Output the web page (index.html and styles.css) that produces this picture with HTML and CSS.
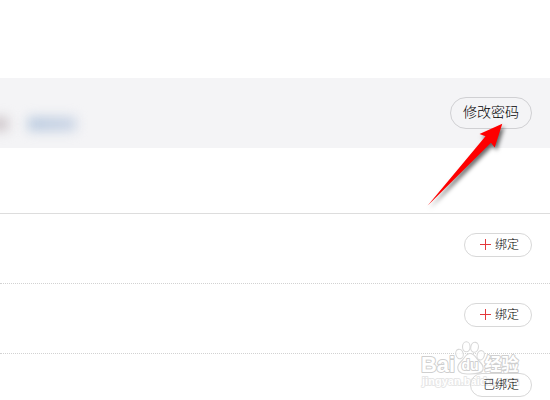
FILE: index.html
```html
<!DOCTYPE html>
<html lang="zh-CN">
<head>
    <meta charset="UTF-8">
    <meta name="viewport" content="width=device-width, initial-scale=1.0">
    <title>账号安全</title>
    <link rel="stylesheet" href="styles.css">
</head>
<body>
    <div class="account-page">
        <div class="account-bar">
            <div class="account-info">
                <span class="masked masked-label"></span>
                <span class="masked masked-link"></span>
            </div>
            <button type="button" class="btn btn-password">修改密码</button>
        </div>

        <div class="section-header"></div>

        <div class="bind-row">
            <button type="button" class="btn btn-bind"><i class="plus"></i>绑定</button>
        </div>
        <div class="bind-row">
            <button type="button" class="btn btn-bind"><i class="plus"></i>绑定</button>
        </div>
        <div class="bind-row bind-row-last">
            <button type="button" class="btn btn-bound">已绑定</button>
        </div>
    </div>

    <svg class="arrow" width="100" height="110" viewBox="420 110 100 110">
        <path d="M502.3 123.7 L479.5 134 L485.5 136.3 L427.5 205.8 L491 142.8 L494.7 147.5 Z" fill="#fe0000"/>
    </svg>

    <svg class="watermark" width="110" height="55" viewBox="415 338 110 55">
        <g class="paw">
            <ellipse cx="459.5" cy="354" rx="3.7" ry="4.8" transform="rotate(-15 459.5 354)"/>
            <ellipse cx="466.3" cy="346.8" rx="3.8" ry="5"/>
            <ellipse cx="474.6" cy="347.3" rx="3.8" ry="5" transform="rotate(12 474.6 347.3)"/>
            <ellipse cx="480.7" cy="355.3" rx="3.6" ry="4.7" transform="rotate(15 480.7 355.3)"/>
            <path d="M470 353.500c-4 0-5 4-8 7s-5 5-4 9 5 4.500 12 4.500 12-.5 13-4.500-1.500-6-4.500-9-4-7-8.500-7z"/>
        </g>
        <text class="brand" x="421" y="372" textLength="34" lengthAdjust="spacingAndGlyphs">Bai</text>
        <text class="brand brand-du" x="461.500" y="370" textLength="17" lengthAdjust="spacingAndGlyphs">du</text>
        <text class="brand brand-cn" x="484.500" y="371" textLength="34" lengthAdjust="spacingAndGlyphs">经验</text>
        <text class="brand brand-url" x="422" y="385" textLength="97">jingyan.baidu.com</text>
    </svg>
</body>
</html>
```

FILE: styles.css
```css
* {
    margin: 0;
    padding: 0;
    box-sizing: border-box;
}

body {
    font-family: "Liberation Sans", "Noto Sans CJK SC", sans-serif;
    background: #fff;
    color: #333;
    height: 400px;
    overflow: hidden;
    position: relative;
}

.account-page {
    padding-top: 78px;
}

.account-bar {
    display: flex;
    align-items: center;
    justify-content: space-between;
    height: 70px;
    padding-right: 18px;
    background: #f4f4f6;
}

.account-info {
    display: flex;
    align-items: center;
    gap: 20px;
    padding-top: 22px;
}

.masked {
    height: 14px;
    filter: blur(6px);
}

.masked-label {
    width: 16px;
    margin-left: -8px;
    background: #cdc5c9;
}

.masked-link {
    width: 48px;
    background: linear-gradient(90deg, #b9cadf, #cad4e5);
}

.btn {
    display: flex;
    align-items: center;
    justify-content: center;
    height: 24px;
    padding-bottom: 1px;
    border: 1px solid #d8d8d8;
    border-radius: 16px;
    background: transparent;
    color: #000;
    font-family: inherit;
    font-size: 12px;
    font-weight: 300;
    line-height: 1;
    white-space: nowrap;
    cursor: pointer;
}

.btn-password {
    width: 82px;
    height: 32px;
    padding-bottom: 2px;
    border-color: #d0d0d3;
    font-size: 14px;
}

.section-header {
    height: 66px;
    border-bottom: 1px solid #ddd;
}

.bind-row {
    display: flex;
    align-items: flex-start;
    justify-content: flex-end;
    height: 70px;
    padding: 19px 18px 0 0;
    border-bottom: 1px dotted #d2d2d2;
}

.bind-row-last {
    height: 46px;
    border-bottom: none;
}

.btn-bind {
    width: 68px;
    padding-left: 3px;
    gap: 4px;
}

.btn-bound {
    position: relative;
    z-index: 2;
    width: 62px;
}

.plus {
    width: 11px;
    height: 11px;
    background:
        linear-gradient(#e4393c, #e4393c) center / 11px 1px no-repeat,
        linear-gradient(#e4393c, #e4393c) center / 1px 11px no-repeat;
}

.arrow {
    position: absolute;
    left: 420px;
    top: 110px;
    filter: drop-shadow(2px 3px 2px rgba(0, 0, 0, 0.6));
    pointer-events: none;
}

.watermark {
    position: absolute;
    left: 415px;
    top: 338px;
    z-index: 1;
    pointer-events: none;
}

.paw {
    fill: rgba(255, 255, 255, 0.8);
    stroke: #d8d8d8;
    stroke-width: 1.1;
}

.brand {
    font-size: 22px;
    font-weight: bold;
    fill: #fff;
    stroke: #cfcfcf;
    stroke-width: 2;
    stroke-linejoin: round;
    paint-order: stroke;
}

.brand-du {
    font-size: 15px;
}

.brand-cn {
    font-size: 18px;
}

.brand-url {
    font-size: 11px;
    fill: #fff;
    stroke: #e6e6e6;
    stroke-width: 1.8;
}
```
